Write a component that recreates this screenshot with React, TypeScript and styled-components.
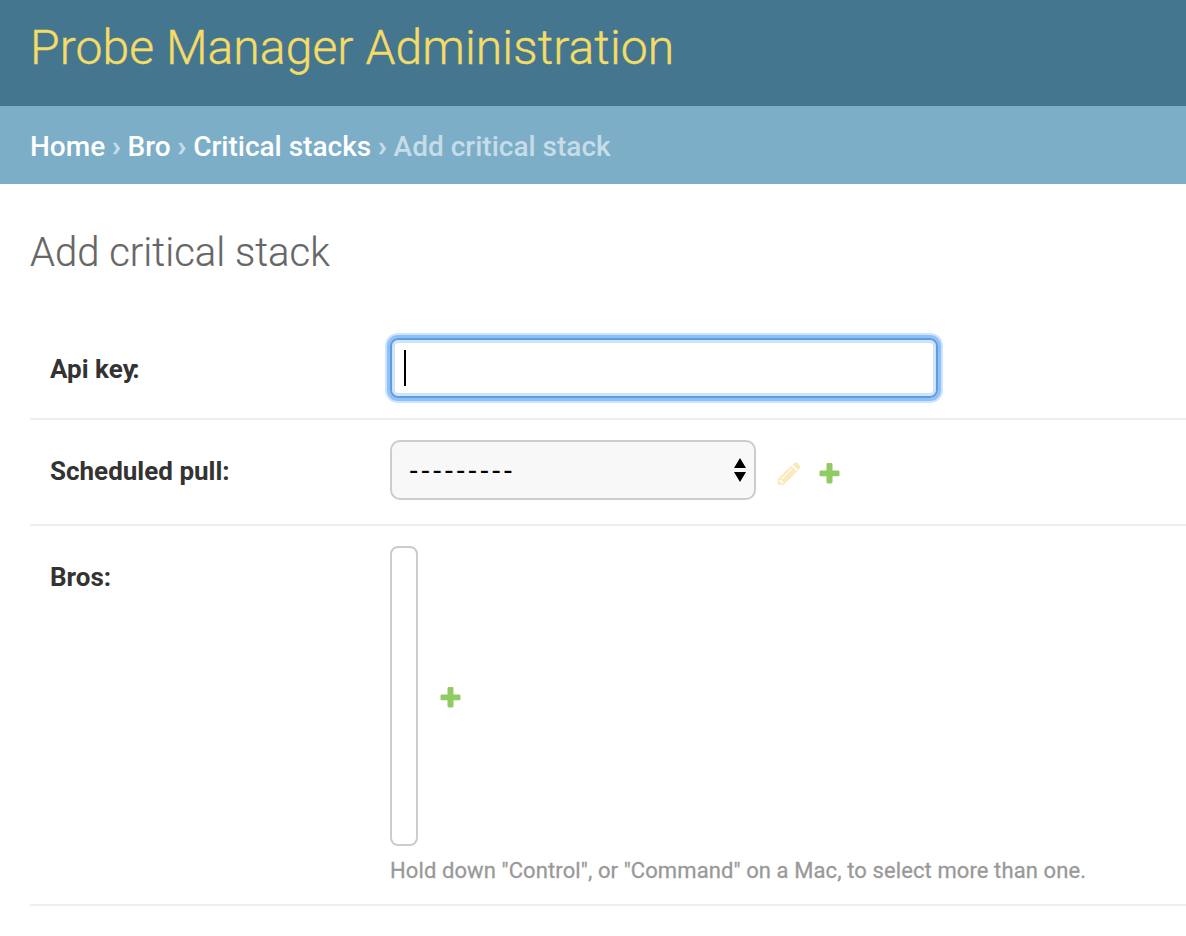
import React from 'react';
import styled, { createGlobalStyle } from 'styled-components';

const GlobalStyle = createGlobalStyle`
  *, *::before, *::after { box-sizing: border-box; }
  body { margin: 0; background: #fff; color: #333; font-family: Roboto, "Liberation Sans", sans-serif; overflow: hidden; }
`;
const Page = styled.div`
  height: 936px;
  overflow: hidden;
`;
const Header = styled.header`
  height: 106px;
  padding: 19px 30px 0;
  background: #44778f;
`;
const SiteName = styled.h1`
  margin: 0;
  font-size: 48px;
  line-height: 58px;
  font-weight: 300;
  letter-spacing: 0.1px;
  color: #f5dc65;
  -webkit-text-stroke: 0.4px #f5dc65;
  white-space: nowrap;
`;
const Breadcrumbs = styled.nav`
  display: flex;
  gap: 7px;
  height: 78px;
  padding: 1px 30px 0;
  line-height: 80px;
  background: #7caec7;
  color: #c6dce8;
  font-size: 28px;
  font-weight: 500;
  white-space: nowrap;
`;
const Crumb = styled.a`
  color: #fff;
`;
const Separator = styled.span`
  -webkit-text-stroke: 0.6px currentColor;
`;
const Title = styled.h2`
  margin: 0;
  padding: 43px 30px 0;
  height: 134px;
  font-size: 40px;
  line-height: 52px;
  font-weight: 300;
  color: #666;
  -webkit-text-stroke: 0.2px #666;
`;
const Form = styled.form`
  margin-left: 30px;
`;
const Row = styled.div<{ $height: number }>`
  display: flex;
  align-items: flex-start;
  height: ${(p) => p.$height}px;
  padding: 20px 0 0 20px;
  border-bottom: 2px solid #eee;
`;
const Label = styled.label`
  width: 340px;
  flex: none;
  padding-top: 15px;
  font-size: 26px;
  line-height: 32px;
  font-weight: 700;
  color: #333;
`;
const Kerned = styled.span`
  letter-spacing: -3.5px;
`;
const TextField = styled.div`
  display: flex;
  align-items: center;
  width: 548px;
  height: 60px;
  padding-left: 12px;
  border: 2px solid #609cdb;
  border-radius: 8px;
  box-shadow: inset 0 0 0 3px #cee4fd, 0 0 0 3px #8dc1fb, 0 0 0 5px #cee4fd;
`;
const Caret = styled.span`
  width: 2px;
  height: 36px;
  background: #000;
`;
const Select = styled.div`
  display: flex;
  align-items: center;
  justify-content: space-between;
  width: 366px;
  height: 60px;
  padding: 0 8px 0 17px;
  border: 2px solid #ccc;
  border-radius: 10px;
  background: #f8f8f8;
  color: #000;
  font-family: "Liberation Sans", sans-serif;
  font-size: 28px;
  letter-spacing: 2.45px;
`;
const Icon = styled.svg<{ $left?: number; $top?: number }>`
  display: block;
  flex: none;
  margin-left: ${(p) => p.$left ?? 0}px;
  margin-top: ${(p) => p.$top ?? 0}px;
`;
const Field = styled.div`
  display: flex;
`;
const ListBox = styled.div`
  width: 28px;
  height: 300px;
  border: 2px solid #ccc;
  border-radius: 8px;
`;
const Help = styled.p`
  margin: 10px 0 0;
  font-size: 22px;
  line-height: 30px;
  letter-spacing: 0.1px;
  color: #999;
  -webkit-text-stroke: 0.3px #999;
  white-space: nowrap;
`;

const Plus = ({ left, top }: { left: number; top: number }) => (
  <Icon $left={left} $top={top} width="21" height="21" viewBox="0 0 21 21">
    <path fill="#8fcb62" d="M8.900 0h3.200q1.400 0 1.400 1.400V7.500h5.800q1.200 0 1.200 1.400v3q0 1.400-1.200 1.400h-5.800v5.800q0 1.400-1.400 1.400H8.900q-1.400 0-1.400-1.400v-5.800H1.700Q.5 13.300.5 11.900v-3q0-1.400 1.200-1.400h5.800V1.400Q7.500 0 8.900 0Z" />
  </Icon>
);

export default function App() {
  return (
    <Page>
      <GlobalStyle />
      <Header><SiteName>Probe Manager Administration</SiteName></Header>
      <Breadcrumbs>
        <Crumb>Home</Crumb><Separator>›</Separator><Crumb>Bro</Crumb><Separator>›</Separator>
        <Crumb>Critical stacks</Crumb><Separator>›</Separator><span>Add critical stack</span>
      </Breadcrumbs>
      <Title>Add critical stack</Title>
      <Form>
        <Row $height={102}>
          <Label>Api ke<Kerned>y</Kerned>:</Label>
          <TextField><Caret /></TextField>
        </Row>
        <Row $height={106}>
          <Label>Scheduled pull:</Label>
          <Select>
            <span>---------</span>
            <Icon width="12" height="24" viewBox="0 0 12 24"><path d="M6 0l6 10H0ZM0 14h12L6 24Z" /></Icon>
          </Select>
          <Icon $left={21} $top={22} width="24" height="24" viewBox="0 0 24 24">
            <path fill="#fbe9bd" fillRule="evenodd" d="M.8 22.800V17L14.300 3.700l5.800 5.800L6.700 22.800ZM4.300 16.700L14.600 6.500l.7.700L5 17.400ZM2.500 18.200v1.700h1.800v1.600h1.500l.8-.9-3.200-3.200ZM15.600 2.500L17.500.8q1.200-1.200 2.400 0l3 3q1.200 1.200 0 2.400L21.200 8.200Z" />
          </Icon>
          <Plus left={18} top={23} />
        </Row>
        <Row $height={380}>
          <Label>Bros:</Label>
          <div>
            <Field><ListBox /><Plus left={22} top={141} /></Field>
            <Help>Hold down "Control", or "Command" on a Mac, to select more than one.</Help>
          </div>
        </Row>
      </Form>
    </Page>
  );
}
